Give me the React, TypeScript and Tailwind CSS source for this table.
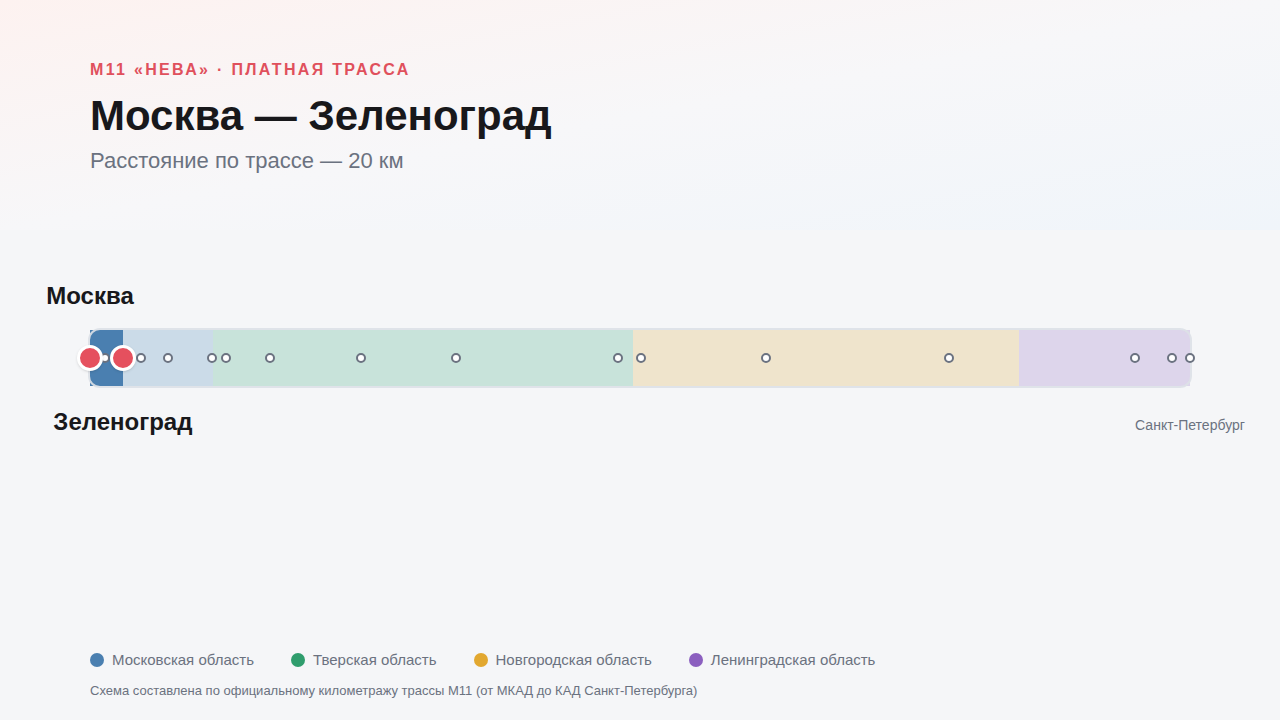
import React from "react";

const TOTAL_KM = 669;

const regions = [
  { name: "Московская область", from: 0, to: 75, dot: "bg-[#4a7fb0]", fill: "bg-[#cbdbe8]" },
  { name: "Тверская область", from: 75, to: 330, dot: "bg-[#2f9d6d]", fill: "bg-[#c8e3da]" },
  { name: "Новгородская область", from: 330, to: 565, dot: "bg-[#e2a830]", fill: "bg-[#efe4cc]" },
  { name: "Ленинградская область", from: 565, to: 669, dot: "bg-[#8b5fbf]", fill: "bg-[#ddd5eb]" },
];

// промежуточные пункты (км от МКАД)
const stops = [9, 31, 47.4, 74.2, 82.7, 109.5, 164.8, 222.6, 321.1, 335.1, 411.1, 522.4, 635.6, 658.1, 669];

const ROUTE_FROM = 0;
const ROUTE_TO = 20;

const pct = (km: number) => `${(km / TOTAL_KM) * 100}%`;

function RouteBar() {
  return (
    <div className="relative mt-[100px] h-[56px] w-full">
      <div className="flex h-full w-full">
        <div className="h-full bg-[#4a7fb0]" style={{ width: pct(ROUTE_TO - ROUTE_FROM) }} />
        {regions.map((r, i) => {
          const from = i === 0 ? ROUTE_TO : r.from;
          return <div key={r.name} className={`h-full ${r.fill}`} style={{ width: pct(r.to - from) }} />;
        })}
      </div>
      <div className="pointer-events-none absolute -inset-[2px] rounded-[12px] border-2 border-[#dde1e7]/90" />

      {stops.map((km) => (
        <span
          key={km}
          className="absolute top-1/2 h-[10px] w-[10px] -translate-x-1/2 -translate-y-1/2 rounded-full border-2 border-[#6b7280] bg-white"
          style={{ left: pct(km) }}
        />
      ))}

      {[ROUTE_FROM, ROUTE_TO].map((km) => (
        <span
          key={`m${km}`}
          className="absolute top-1/2 h-[26px] w-[26px] -translate-x-1/2 -translate-y-1/2 rounded-full border-[3px] border-white bg-[#e5505e] shadow-sm"
          style={{ left: pct(km) }}
        />
      ))}

      <span
        className="absolute bottom-[calc(100%+20px)] -translate-x-1/2 whitespace-nowrap text-[24px] font-bold leading-7 text-[#18181b]"
        style={{ left: pct(ROUTE_FROM) }}
      >
        Москва
      </span>
      <span
        className="absolute top-[calc(100%+22px)] -translate-x-1/2 whitespace-nowrap text-[24px] font-bold leading-7 text-[#18181b]"
        style={{ left: pct(ROUTE_TO) }}
      >
        Зеленоград
      </span>
      <span className="absolute left-full top-[calc(100%+29px)] -translate-x-1/2 whitespace-nowrap text-[14px] leading-5 text-[#6b7280]">
        Санкт-Петербург
      </span>
    </div>
  );
}

export default function App() {
  return (
    <div className="flex h-screen w-full flex-col bg-[#f5f6f8] [font-family:'Liberation_Sans',Arial,sans-serif]">
      <header className="h-[230px] bg-gradient-to-br from-[#fdf2f0] via-[#f7f7f9] to-[#f0f5fa] px-[90px] pt-[60px]">
        <p className="text-[16px] font-bold uppercase leading-5 tracking-[0.145em] text-[#e0505c]">
          М11 «Нева» · платная трасса
        </p>
        <h1 className="mt-[11px] text-[42px] font-bold leading-[50px] text-[#18181b]">Москва — Зеленоград</h1>
        <p className="mt-[6px] text-[22px] leading-7 text-[#6b7280]">Расстояние по трассе — 20 км</p>
      </header>

      <main className="px-[90px]">
        <RouteBar />
      </main>

      <footer className="mt-auto px-[90px] pb-5">
        <div className="flex items-center gap-[37px]">
          {regions.map((r) => (
            <div key={r.name} className="flex items-center gap-2">
              <span className={`h-[14px] w-[14px] rounded-full ${r.dot}`} />
              <span className="text-[15px] leading-5 text-[#6b7280]">{r.name}</span>
            </div>
          ))}
        </div>
        <p className="mt-3 text-[13px] leading-[18px] text-[#6b7280]">
          Схема составлена по официальному километражу трассы М11 (от МКАД до КАД Санкт-Петербурга)
        </p>
      </footer>
    </div>
  );
}
